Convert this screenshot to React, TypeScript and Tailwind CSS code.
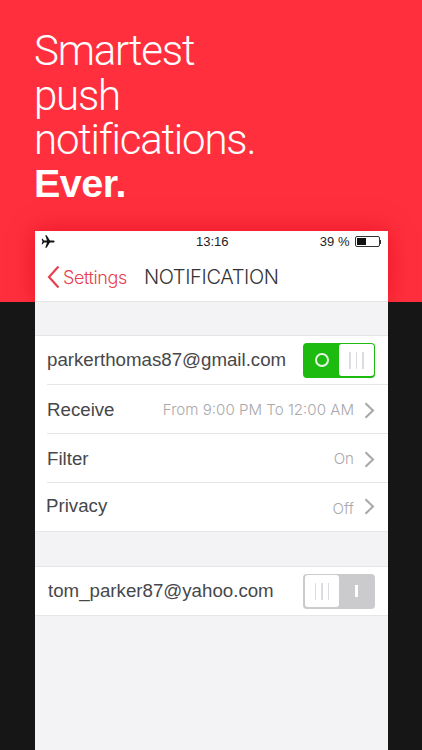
import React from "react";

const labelClass = "text-[18.7px] leading-[24px] text-[#47474a] font-['Liberation_Sans',sans-serif]";
const valueClass = "ml-auto text-[15.1px] font-light text-[#a9a9ac] font-['Inter',sans-serif] translate-y-[1px]";

function Chevron() {
  return (
    <svg width="11" height="17" viewBox="0 0 11 17" fill="none" className="ml-[10px] shrink-0 translate-y-[1px]">
      <path d="M1.5 1.2 L9 8.5 L1.5 15.8" stroke="#a9a9ab" strokeWidth="2.1" />
    </svg>
  );
}

function Row({ label, value }: { label: string; value: string }) {
  return (
    <div className="h-[49px] flex items-center border-b border-[#e6e6e8] ml-[12px] pr-[13px] pt-[1px]">
      <span className={labelClass}>{label}</span>
      <span className={valueClass}>{value}</span>
      <Chevron />
    </div>
  );
}

function Bars() {
  return (
    <div className="flex gap-[5px]">
      <div className="w-[1.5px] h-[17px] bg-[#dcdce0]" />
      <div className="w-[1.5px] h-[17px] bg-[#dcdce0]" />
      <div className="w-[1.5px] h-[17px] bg-[#dcdce0]" />
    </div>
  );
}

export default function App() {
  return (
    <div className="w-[422px] h-[750px] overflow-hidden bg-[#161616] font-['Inter',sans-serif]">
      <div className="h-[302px] overflow-hidden bg-[#ff2f3e]">
        <div className="pl-[34px] pt-[29px] h-[231px]">
          <h1 className="text-[42px] leading-[44.5px] font-light text-white font-['Roboto',sans-serif] tracking-[-1.2px]">
            Smartest<br />push<br />notifications.<br />
            <span className="font-bold font-['Liberation_Sans',sans-serif] text-[39.5px] tracking-[-0.5px] relative -top-[2px]">Ever.</span>
          </h1>
        </div>
        <div className="ml-[35px] w-[353px] h-[71px] shadow-[0_0_22px_rgba(215,0,20,0.6)]" />
      </div>
      <div className="relative -mt-[71px] ml-[35px] w-[353px] h-[519px] bg-[#f3f3f5] flex flex-col">
        <div className="bg-white h-[71px] border-b border-[#e4e4e6]">
          <div className="h-[21px] flex items-center pl-[6px] pr-[7px] relative text-[13px] text-[#222] font-['Liberation_Sans',sans-serif]">
            <svg width="14" height="13" viewBox="0 0 14 13" fill="#111">
              <path d="M13.6 6.5c0-.6-.7-1-1.4-1H8.9L5.6.3H4.3l1.7 5.2H3L1.6 3.8H.6L1.5 6.5.6 9.2h1L3 7.5h3L4.3 12.7h1.3l3.3-5.2h3.3c.7 0 1.4-.4 1.4-1z" />
            </svg>
            <span className="absolute left-[161px]">13:16</span>
            <span className="ml-auto">39 %</span>
            <div className="ml-[5px] w-[25px] h-[11px] border border-[#333] rounded-[2px] p-[1px]">
              <div className="w-[9px] h-full bg-[#111]" />
            </div>
            <div className="w-[1.5px] h-[4px] bg-[#333]" />
          </div>
          <div className="h-[49px] flex items-center pl-[12px] pt-[1px] font-light">
            <svg width="13" height="24" viewBox="0 0 13 24" fill="none">
              <path d="M11.5 1.5 L2 12 L11.5 22.5" stroke="#e8404e" strokeWidth="2.2" />
            </svg>
            <span className="ml-[3px] text-[18px] text-[#e8404e] tracking-[-0.4px]">Settings</span>
            <span className="ml-[17px] text-[20px] text-[#333336] tracking-[-0.35px]">NOTIFICATION</span>
          </div>
        </div>
        <div className="h-[33px]" />
        <div className="bg-white border-y border-[#e6e6e8]">
          <div className="h-[49px] flex items-center border-b border-[#e6e6e8] ml-[12px] pr-[13px]">
            <span className={labelClass}>parkerthomas87@gmail.com</span>
            <div className="ml-auto w-[72px] h-[35px] rounded-[4px] bg-[#1dbb10] flex items-center p-[1.5px]">
              <div className="w-[34.5px] flex justify-center">
                <div className="w-[14px] h-[14px] rounded-full border-2 border-[#e4f7e0]" />
              </div>
              <div className="flex-1 h-full rounded-[3px] bg-white flex items-center justify-center">
                <Bars />
              </div>
            </div>
          </div>
          <Row label="Receive" value="From 9:00 PM To 12:00 AM" />
          <Row label="Filter" value="On" />
          <div className="h-[48px] flex items-center ml-[11px] pr-[13px] pb-[3px]">
            <span className={labelClass}>Privacy</span>
            <span className={valueClass + " translate-y-[4px]"}>Off</span>
            <Chevron />
          </div>
        </div>
        <div className="h-[34px]" />
        <div className="bg-white border-y border-[#e6e6e8] h-[50px] flex items-center pl-[13px] pr-[13px]">
          <span className={labelClass}>tom_parker87@yahoo.com</span>
          <div className="ml-auto w-[72px] h-[35px] rounded-[4px] bg-[#cbcbcd] flex items-center p-[1.5px]">
            <div className="w-[34.5px] h-full rounded-[3px] bg-white flex items-center justify-center">
              <Bars />
            </div>
            <div className="flex-1 flex justify-center">
              <div className="w-[2.5px] h-[12px] bg-white" />
            </div>
          </div>
        </div>
      </div>
    </div>
  );
}
